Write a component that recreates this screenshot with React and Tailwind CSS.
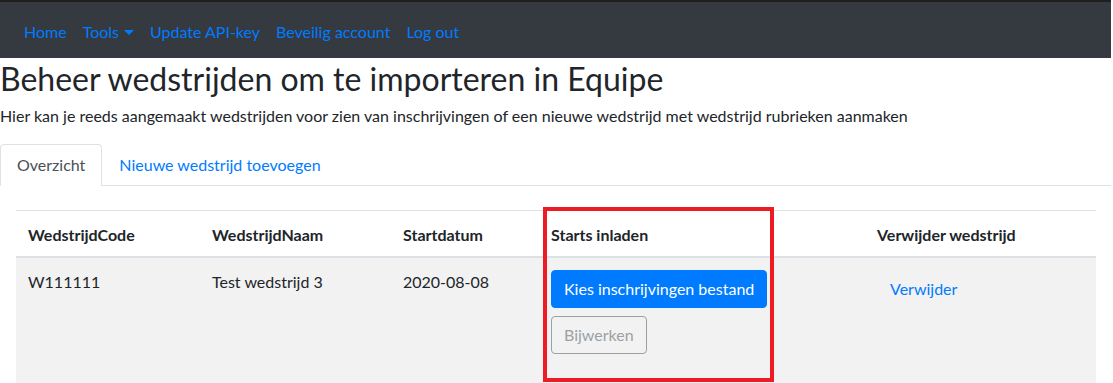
import React from "react";

function Caret() {
  return (
    <svg width="10" height="5" viewBox="0 0 10 5" className="ml-[5px] inline-block align-[3px]">
      <polygon points="0,0 10,0 5,5" fill="#007bff" />
    </svg>
  );
}

export default function App() {
  const nav = ["Update API-key", "Beveilig account", "Log out"];
  return (
    <div className="relative w-[1111px] bg-white font-['Lato',sans-serif] text-base leading-6 text-[#212529]">
      <div className="h-[2px] bg-[#1f1f1f]" />
      <nav className="flex h-[56px] items-start bg-[#343a40] px-4 pt-[10px]">
        <a className="px-2 py-2 text-[#007bff]">Home</a>
        <a className="px-2 py-2 text-[#007bff]">
          Tools
          <Caret />
        </a>
        {nav.map((n) => (
          <a key={n} className="px-2 py-2 text-[#007bff]">
            {n}
          </a>
        ))}
      </nav>

      <h1 className="mt-[2px] mb-[6px] text-[32px] font-normal leading-[38.4px]">
        Beheer wedstrijden om te importeren in Equipe
      </h1>
      <p className="mb-4">
        Hier kan je reeds aangemaakt wedstrijden voor zien van inschrijvingen of een nieuwe wedstrijd met wedstrijd rubrieken aanmaken
      </p>

      <ul className="flex border-b border-[#dee2e6]">
        <li className="-mb-px">
          <a className="block rounded-t-[4px] border border-[#dee2e6] border-b-white bg-white px-4 py-2 text-[#495057]">
            Overzicht
          </a>
        </li>
        <li className="-mb-px">
          <a className="block rounded-t-[4px] border border-transparent px-4 py-2 text-[#007bff]">
            Nieuwe wedstrijd toevoegen
          </a>
        </li>
      </ul>

      <div className="mt-6 ml-4">
        <table className="w-[1080px] table-fixed border-collapse">
          <thead>
            <tr className="text-left font-bold">
              <th className="w-[184px] border-t border-b-2 border-[#dee2e6] px-3 pt-3 pb-[9px] align-bottom">WedstrijdCode</th>
              <th className="w-[191px] border-t border-b-2 border-[#dee2e6] px-3 pt-3 pb-[9px] align-bottom">WedstrijdNaam</th>
              <th className="w-[148px] border-t border-b-2 border-[#dee2e6] px-3 pt-3 pb-[9px] align-bottom">Startdatum</th>
              <th className="w-[326px] border-t border-b-2 border-[#dee2e6] px-3 pt-3 pb-[9px] align-bottom">Starts inladen</th>
              <th className="w-[231px] border-t border-b-2 border-[#dee2e6] px-3 pt-3 pb-[9px] align-bottom">Verwijder wedstrijd</th>
            </tr>
          </thead>
          <tbody>
            <tr className="bg-[#f2f2f2]">
              <td className="px-3 pt-3 pb-10 align-top">W111111</td>
              <td className="px-3 pt-3 pb-10 align-top">Test wedstrijd 3</td>
              <td className="px-3 pt-3 pb-10 align-top">2020-08-08</td>
              <td className="px-3 pt-3 pb-10 align-top">
                <div className="flex flex-col items-start gap-2">
                  <button className="rounded-[4px] border border-[#007bff] bg-[#007bff] px-3 py-[6px] leading-6 text-white">
                    Kies inschrijvingen bestand
                  </button>
                  <button disabled className="rounded-[4px] border border-[#6c757d] px-3 py-[6px] leading-6 text-[#6c757d] opacity-[0.65]">
                    Bijwerken
                  </button>
                </div>
              </td>
              <td className="px-3 pt-3 pb-10 align-top">
                <a className="inline-block border border-transparent px-3 py-[6px] leading-6 text-[#007bff]">Verwijder</a>
              </td>
            </tr>
          </tbody>
        </table>
      </div>

      <div className="absolute top-[207px] left-[543px] h-[175px] w-[231px] border-4 border-[#ed1c24]" />
    </div>
  );
}
